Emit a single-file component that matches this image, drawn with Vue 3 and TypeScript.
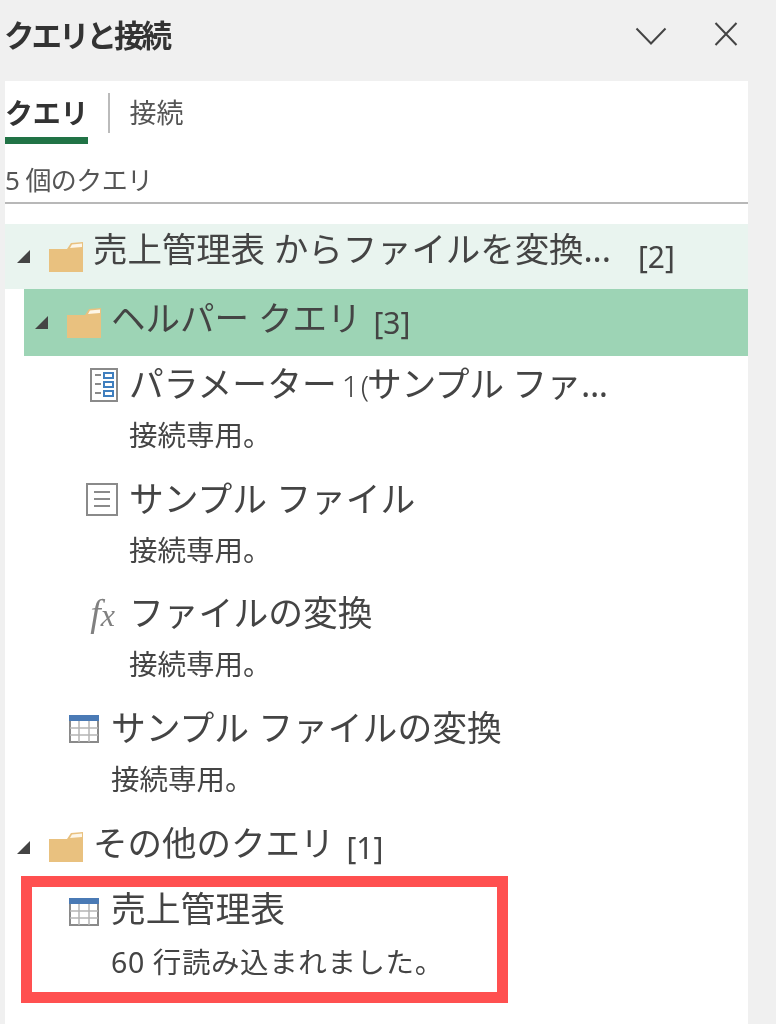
<script setup lang="ts">
type Kind = "param" | "doc" | "fx";

interface Query {
  name: string;
  note: string;
  kind: Kind;
}

const helperQueries: Query[] = [
  { name: "サンプル ファイル", note: "接続専用。", kind: "doc" },
  { name: "ファイルの変換", note: "接続専用。", kind: "fx" },
];
</script>

<template>
  <div class="pane">
    <header class="head">
      <h1>クエリと接続</h1>
      <div class="head-btns">
        <svg class="chev" width="32" height="18" viewBox="0 0 32 18"><path d="M1.5 1.5 16 16.5 30.500 1.500" fill="none" stroke="#444" stroke-width="2" /></svg>
        <svg width="24" height="24" viewBox="0 0 24 24"><path d="M1.500 1 22.500 23M22.500 1 1.500 23" fill="none" stroke="#444" stroke-width="2" /></svg>
      </div>
    </header>

    <main class="panel">
      <div class="tabs">
        <span class="tab active">クエリ</span>
        <span class="tab-sep"></span>
        <span class="tab">接続</span>
      </div>
      <div class="count">5 個のクエリ</div>

      <div class="tree">
        <div class="group group-light">
          <span class="tri"></span>
          <svg class="folder" viewBox="0 0 34 30"><path d="M0 7 18 7 22 1 34 0V30H0Z" fill="#e9c17f" /><path d="M23 2.500 33 1.500V5L21 6Z" fill="#fdf6e8" /></svg>
          <span class="gname wide">売上管理表 からファイルを変換...</span>
          <span class="gcount">[2]</span>
        </div>
        <div class="group group-sel">
          <span class="tri"></span>
          <svg class="folder" viewBox="0 0 34 30"><path d="M0 7 18 7 22 1 34 0V30H0Z" fill="#e9c17f" /><path d="M23 2.500 33 1.500V5L21 6Z" fill="#fdf6e8" /></svg>
          <span class="gname">ヘルパー クエリ</span>
          <span class="gcount">[3]</span>
        </div>

        <div class="item nested">
          <div class="title">
            <span class="icon">
              <svg width="28" height="34" viewBox="0 0 28 34">
                <rect x="1" y="1" width="26" height="32" fill="#fff" stroke="#8a8a8a" stroke-width="2" />
                <path d="M5 7H11M5 16H11M5 25H11" stroke="#8a8a8a" stroke-width="2" />
                <path d="M14 5H23V10H14ZM14 14H23V19H14ZM14 23H23V28H14Z" fill="none" stroke="#3f7fbf" stroke-width="2" />
              </svg>
            </span>
            <span class="qname">パラメーター<small>1 (</small><span class="tight">サンプル ファ...</span></span>
          </div>
          <div class="note">接続専用。</div>
        </div>

        <div v-for="q in helperQueries" :key="q.name" class="item nested">
          <div class="title">
            <span class="icon">
              <svg v-if="q.kind === 'doc'" width="32" height="33" viewBox="0 0 32 33">
                <rect x="1" y="1" width="30" height="31" fill="#fff" stroke="#8a8a8a" stroke-width="2" />
                <path d="M8 9H24M8 16H24M8 23H24" stroke="#8a8a8a" stroke-width="2" />
              </svg>
              <span v-else class="fx">f<i>x</i></span>
            </span>
            <span class="qname">{{ q.name }}</span>
          </div>
          <div class="note">{{ q.note }}</div>
        </div>

        <div class="item plain">
          <div class="title">
            <span class="icon">
              <svg width="30" height="28" viewBox="0 0 30 28">
                <rect x="1" y="1" width="28" height="26" fill="#fff" stroke="#8a8a8a" stroke-width="2" />
                <rect x="0" y="0" width="30" height="6" fill="#4a7ab5" />
                <path d="M10 6V27M20 6V27M1 13H29M1 20H29" stroke="#b5b5b5" stroke-width="1.500" />
              </svg>
            </span>
            <span class="qname">サンプル ファイルの変換</span>
          </div>
          <div class="note">接続専用。</div>
        </div>

        <div class="group group-other">
          <span class="tri"></span>
          <svg class="folder" viewBox="0 0 34 30"><path d="M0 7 18 7 22 1 34 0V30H0Z" fill="#e9c17f" /><path d="M23 2.500 33 1.500V5L21 6Z" fill="#fdf6e8" /></svg>
          <span class="gname">その他のクエリ</span>
          <span class="gcount">[1]</span>
        </div>

        <div class="item plain last">
          <div class="title">
            <span class="icon">
              <svg width="30" height="28" viewBox="0 0 30 28">
                <rect x="1" y="1" width="28" height="26" fill="#fff" stroke="#8a8a8a" stroke-width="2" />
                <rect x="0" y="0" width="30" height="6" fill="#4a7ab5" />
                <path d="M10 6V27M20 6V27M1 13H29M1 20H29" stroke="#b5b5b5" stroke-width="1.500" />
              </svg>
            </span>
            <span class="qname">売上管理表</span>
          </div>
          <div class="note long">60 行読み込まれました。</div>
          <div class="callout"></div>
        </div>
      </div>
    </main>
  </div>
</template>

<style>
html,
body {
  margin: 0;
  background: #f0f0f0;
}
</style>

<style scoped>
.pane {
  width: 776px;
  height: 1024px;
  overflow: hidden;
  background: #f0f0f0;
  color: #444;
  font-family: "Noto Sans", "Noto Sans CJK JP", sans-serif;
  display: flex;
  flex-direction: column;
  filter: blur(0.5px);
}
.head {
  height: 81px;
  padding: 0 38px 13px 4px;
  box-sizing: border-box;
  display: flex;
  align-items: center;
  justify-content: space-between;
}
.head h1 {
  margin: 0;
  font-size: 30.500px;
  font-weight: 700;
  color: #333;
  letter-spacing: -3px;
}
.head-btns {
  display: flex;
  align-items: center;
  gap: 47px;
}
.chev {
  margin-top: 4px;
}
.panel {
  margin-left: 5px;
  width: 743px;
  flex: 1;
  background: #fff;
}
.tabs {
  height: 64px;
  display: flex;
  align-items: center;
}
.tab {
  font-size: 27px;
  line-height: 64px;
  color: #555;
}
.tab.active {
  font-size: 28px;
  font-weight: 700;
  color: #333;
  position: relative;
  letter-spacing: -0.200px;
}
.tab.active::after {
  content: "";
  position: absolute;
  left: 0;
  right: 0;
  top: 56px;
  height: 7px;
  background: #217346;
}
.tab-sep {
  width: 2px;
  height: 40px;
  background: #bbb;
  margin: 0 19px 0 20px;
}
.count {
  height: 59px;
  box-sizing: border-box;
  border-bottom: 2px solid #b8b8b8;
  font-size: 26px;
  line-height: 70px;
  color: #555;
  letter-spacing: -0.600px;
}
.tree {
  padding-top: 20px;
}
.group {
  height: 66px;
  display: flex;
  align-items: center;
  box-sizing: border-box;
  padding-left: 12px;
}
.group-light {
  height: 65px;
  background: #e9f4ef;
}
.group-sel {
  height: 67px;
  margin-left: 19px;
  padding-left: 11px;
  background: #9dd4b5;
}
.tri {
  width: 0;
  height: 0;
  border-style: solid;
  border-width: 0 0 13px 13px;
  border-color: transparent transparent #444 transparent;
  margin-right: 19px;
  flex: none;
}
.folder {
  width: 34px;
  height: 30px;
  flex: none;
  margin-right: 10px;
}
.gname {
  font-size: 34.500px;
  line-height: 1.200;
  white-space: nowrap;
  margin-top: -10px;
}
.gname.wide {
  width: 515px;
  letter-spacing: -0.100px;
  margin-top: -16px;
}
.gcount {
  font-size: 30px;
  margin-left: 12px;
}
.group-light .gcount {
  margin-left: 30px;
}
.item {
  height: 114.600px;
  padding-left: 105px;
  box-sizing: border-box;
  position: relative;
}
.item.plain {
  padding-left: 106px;
}
.item.nested {
  padding-left: 124px;
}
.item.last {
  padding-top: 3px;
}
.title {
  height: 58px;
  display: flex;
  align-items: center;
}
.icon {
  width: 50px;
  margin-left: -50px;
  padding-right: 11px;
  box-sizing: border-box;
  display: flex;
  justify-content: flex-end;
  flex: none;
}
.item.plain .icon {
  padding-right: 12px;
}
.qname {
  font-size: 34.800px;
  white-space: nowrap;
  margin-top: -6px;
}
.item.last .qname {
  margin-top: -10px;
}
.qname small {
  font-size: 30px;
  font-weight: 300;
  margin-left: 5px;
  letter-spacing: -3px;
}
.tight {
  letter-spacing: -0.400px;
  margin-left: 1px;
}
.fx {
  font-family: "Liberation Serif", serif;
  font-style: italic;
  font-size: 38px;
  line-height: 36px;
  color: #808080;
  position: relative;
  left: -3px;
}
.fx i {
  font-size: 32px;
}
.note {
  font-size: 28.500px;
  line-height: 42px;
  color: #444;
}
.note.long {
  letter-spacing: 0.600px;
}
.callout {
  position: absolute;
  left: 16px;
  top: -4px;
  width: 487px;
  height: 127px;
  box-sizing: border-box;
  border: 11px solid #ff5050;
}
</style>
